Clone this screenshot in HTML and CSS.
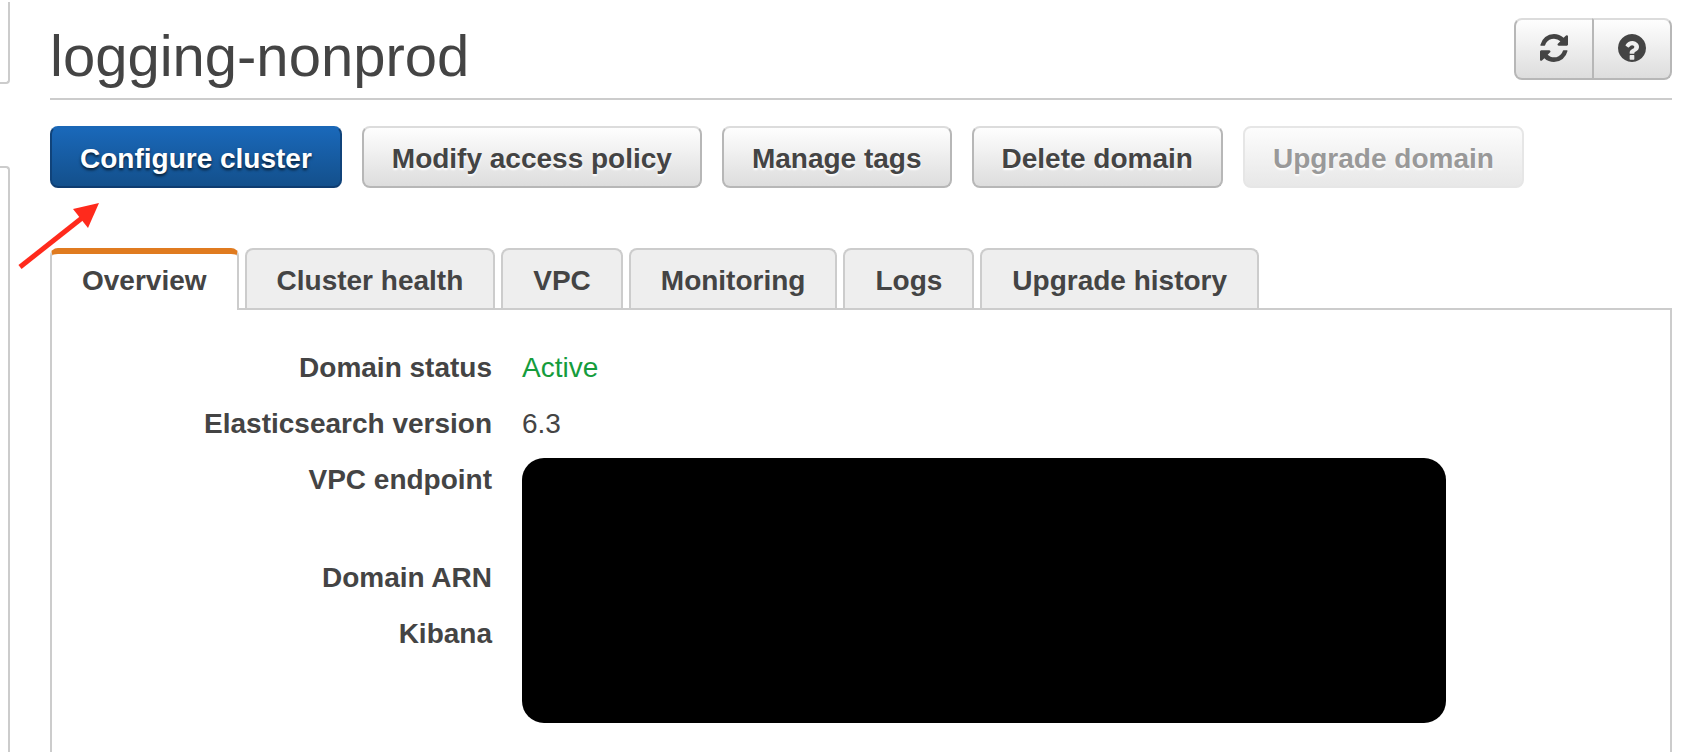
FILE: index.html
```html
<!DOCTYPE html>
<html lang="en">
<head>
<meta charset="utf-8">
<title>logging-nonprod</title>
<link rel="stylesheet" href="styles.css">
</head>
<body>
<div class="page">
  <aside class="side">
    <div class="side-box side-box-top"></div>
    <div class="side-box side-box-rest"></div>
  </aside>
  <main class="main">
    <header class="header">
      <h1 class="title">logging-nonprod</h1>
      <div class="tools">
        <button class="btn tool" type="button" aria-label="Refresh">
          <svg class="icon" viewBox="0 0 1536 1536" aria-hidden="true"><path d="M1511 928q0 5-1 7-64 268-268 434.500T764 1536q-146 0-282.500-55T238 1324l-129 129q-19 19-45 19t-45-19-19-45V960q0-26 19-45t45-19h448q26 0 45 19t19 45-19 45l-137 137q71 66 161 102t187 36q134 0 250-65t186-179q11-17 53-117 8-23 30-23h192q13 0 22.500 9.500t9.500 22.500zm25-800v448q0 26-19 45t-45 19h-448q-26 0-45-19t-19-45 19-45l138-138Q969 256 768 256q-134 0-250 65T332 500q-11 17-53 117-8 23-30 23H50q-13 0-22.500-9.500T18 608v-7q65-268 270-434.500T768 0q146 0 284 55.500T1297 212l130-129q19-19 45-19t45 19 19 45z"/></svg>
        </button>
        <button class="btn tool" type="button" aria-label="Help">
          <svg class="icon" viewBox="0 0 1536 1536" aria-hidden="true"><path d="M896 1376v-192q0-14-9-23t-23-9H672q-14 0-23 9t-9 23v192q0 14 9 23t23 9h192q14 0 23-9t9-23zm256-672q0-88-55.500-163T958 425t-170-41q-243 0-371 213-15 24 8 42l132 100q7 6 19 6 16 0 25-12 53-68 86-92 34-24 86-24 48 0 85.500 26t37.500 59q0 38-20 61t-68 45q-63 28-115.500 86.500T640 1020v36q0 14 9 23t23 9h192q14 0 23-9t9-23q0-19 21.500-49.500T972 957q32-18 49-28.500t46-35 44.500-48 28-60.500 12.500-81zm384 64q0 209-103 385.500T1153.500 1433 768 1536t-385.500-103T103 1153.500 0 768t103-385.500T382.500 103 768 0t385.500 103T1433 382.500 1536 768z"/></svg>
        </button>
      </div>
    </header>
    <div class="actions">
      <button class="btn btn-primary" type="button">Configure cluster</button>
      <button class="btn" type="button">Modify access policy</button>
      <button class="btn" type="button">Manage tags</button>
      <button class="btn" type="button">Delete domain</button>
      <button class="btn" type="button" disabled>Upgrade domain</button>
    </div>
    <div class="tabs" role="tablist">
      <button class="tab tab-active" type="button" role="tab" aria-selected="true" id="tab-overview" aria-controls="overview">Overview</button>
      <button class="tab" type="button" role="tab" aria-selected="false">Cluster health</button>
      <button class="tab" type="button" role="tab" aria-selected="false">VPC</button>
      <button class="tab" type="button" role="tab" aria-selected="false">Monitoring</button>
      <button class="tab" type="button" role="tab" aria-selected="false">Logs</button>
      <button class="tab" type="button" role="tab" aria-selected="false">Upgrade history</button>
    </div>
    <section class="panel" id="overview" role="tabpanel" aria-labelledby="tab-overview">
      <dl class="details">
        <dt>Domain status</dt>
        <dd class="ok">Active</dd>
        <dt>Elasticsearch version</dt>
        <dd>6.3</dd>
        <dt class="tall">VPC endpoint</dt>
        <dd class="redacted"></dd>
        <dt>Domain ARN</dt>
        <dt class="tall">Kibana</dt>
      </dl>
    </section>
  </main>
  <svg class="arrow" viewBox="0 0 84 70" aria-hidden="true">
    <path d="M2 66 64 17" stroke="#ff2a1c" stroke-width="5" fill="none"/>
    <path d="M81 2 55 8 70 27z" fill="#ff2a1c"/>
  </svg>
</div>
</body>
</html>
```

FILE: styles.css
```css
* {
  box-sizing: border-box;
}

body {
  margin: 0;
  background: #fff;
  color: #444;
  font: 28px/44px "Liberation Sans", Arial, sans-serif;
}

.page {
  position: relative;
  display: flex;
  gap: 40px;
  min-height: 100vh;
  padding-right: 24px;
}

.side {
  display: flex;
  flex-direction: column;
  gap: 82px;
  flex: 0 0 10px;
  padding-top: 2px;
}

.side-box {
  border: 0 solid #ccc;
  border-right-width: 2px;
}

.side-box-top {
  height: 82px;
  border-bottom-width: 2px;
  border-bottom-right-radius: 4px;
}

.side-box-rest {
  flex: 1;
  border-top-width: 2px;
  border-top-right-radius: 4px;
}

.main {
  flex: 1;
  min-width: 0;
  display: flex;
  flex-direction: column;
}

.header {
  display: flex;
  justify-content: space-between;
  align-items: flex-end;
  padding: 18px 0;
  border-bottom: 2px solid #ccc;
}

.title {
  margin: 0;
  font-size: 58px;
  line-height: 48px;
  font-weight: 400;
}

.btn {
  height: 62px;
  padding: 4px 28px 0;
  border: 2px solid #b7b7b7;
  border-top-color: #dcdcdc;
  border-radius: 8px;
  background: linear-gradient(#fff, #dcdcdc) border-box;
  color: #444;
  font: bold 28px/32px "Liberation Sans", Arial, sans-serif;
  text-shadow: 0 2px 2px #fff;
  white-space: nowrap;
}

.btn-primary {
  border-color: #14528f #10437a #0e3c70;
  border-top-color: #1a67b6;
  background: linear-gradient(#1a69bb, #134f8a) border-box;
  color: #fff;
  text-shadow: 0 2px 3px rgba(0, 0, 0, 0.7);
}

.btn:disabled {
  border-color: #e6e6e6;
  background: linear-gradient(#fdfdfd, #e7e7e7) border-box;
  color: #999;
}

.tools {
  display: flex;
}

.tool {
  display: flex;
  align-items: center;
  justify-content: center;
  width: 80px;
  padding: 0 0 2px;
}

.tool:first-child {
  border-radius: 8px 0 0 8px;
}

.tool:last-child {
  margin-left: -2px;
  border-radius: 0 8px 8px 0;
}

.icon {
  width: 28px;
  height: 28px;
  fill: #444;
}

.actions {
  display: flex;
  gap: 20px;
  padding: 26px 0 60px;
}

.tabs {
  display: flex;
  gap: 6px;
}

.tab {
  height: 60px;
  padding: 4px 30px 0;
  border: 2px solid #ccc;
  border-bottom: 0;
  border-radius: 8px 8px 0 0;
  background: #eee;
  color: #444;
  font: bold 28px/32px "Liberation Sans", Arial, sans-serif;
  white-space: nowrap;
}

.tab-active {
  height: 62px;
  margin-bottom: -2px;
  padding: 0 30px 2px;
  border-top: 6px solid #e07b20;
  background: #fff;
  z-index: 1;
}

.panel {
  flex: 1;
  padding: 36px 28px 28px 0;
  border: 2px solid #ccc;
  border-bottom: 0;
}

.details {
  display: grid;
  grid-template-columns: 440px minmax(0, 924px);
  grid-template-rows: auto auto auto auto 1fr;
  column-gap: 30px;
  margin: 0;
}

.details dt {
  grid-column: 1;
  padding-bottom: 12px;
  font-weight: bold;
  text-align: right;
}

.details dd {
  grid-column: 2;
  margin: 0;
}

.details .tall {
  min-height: 98px;
}

.details .ok {
  color: #159c3c;
}

.details .redacted {
  grid-row: 3 / 6;
  height: 265px;
  border-radius: 22px;
  background: #000;
}

.arrow {
  position: absolute;
  left: 18px;
  top: 201px;
  width: 84px;
  height: 70px;
  z-index: 2;
}
```
